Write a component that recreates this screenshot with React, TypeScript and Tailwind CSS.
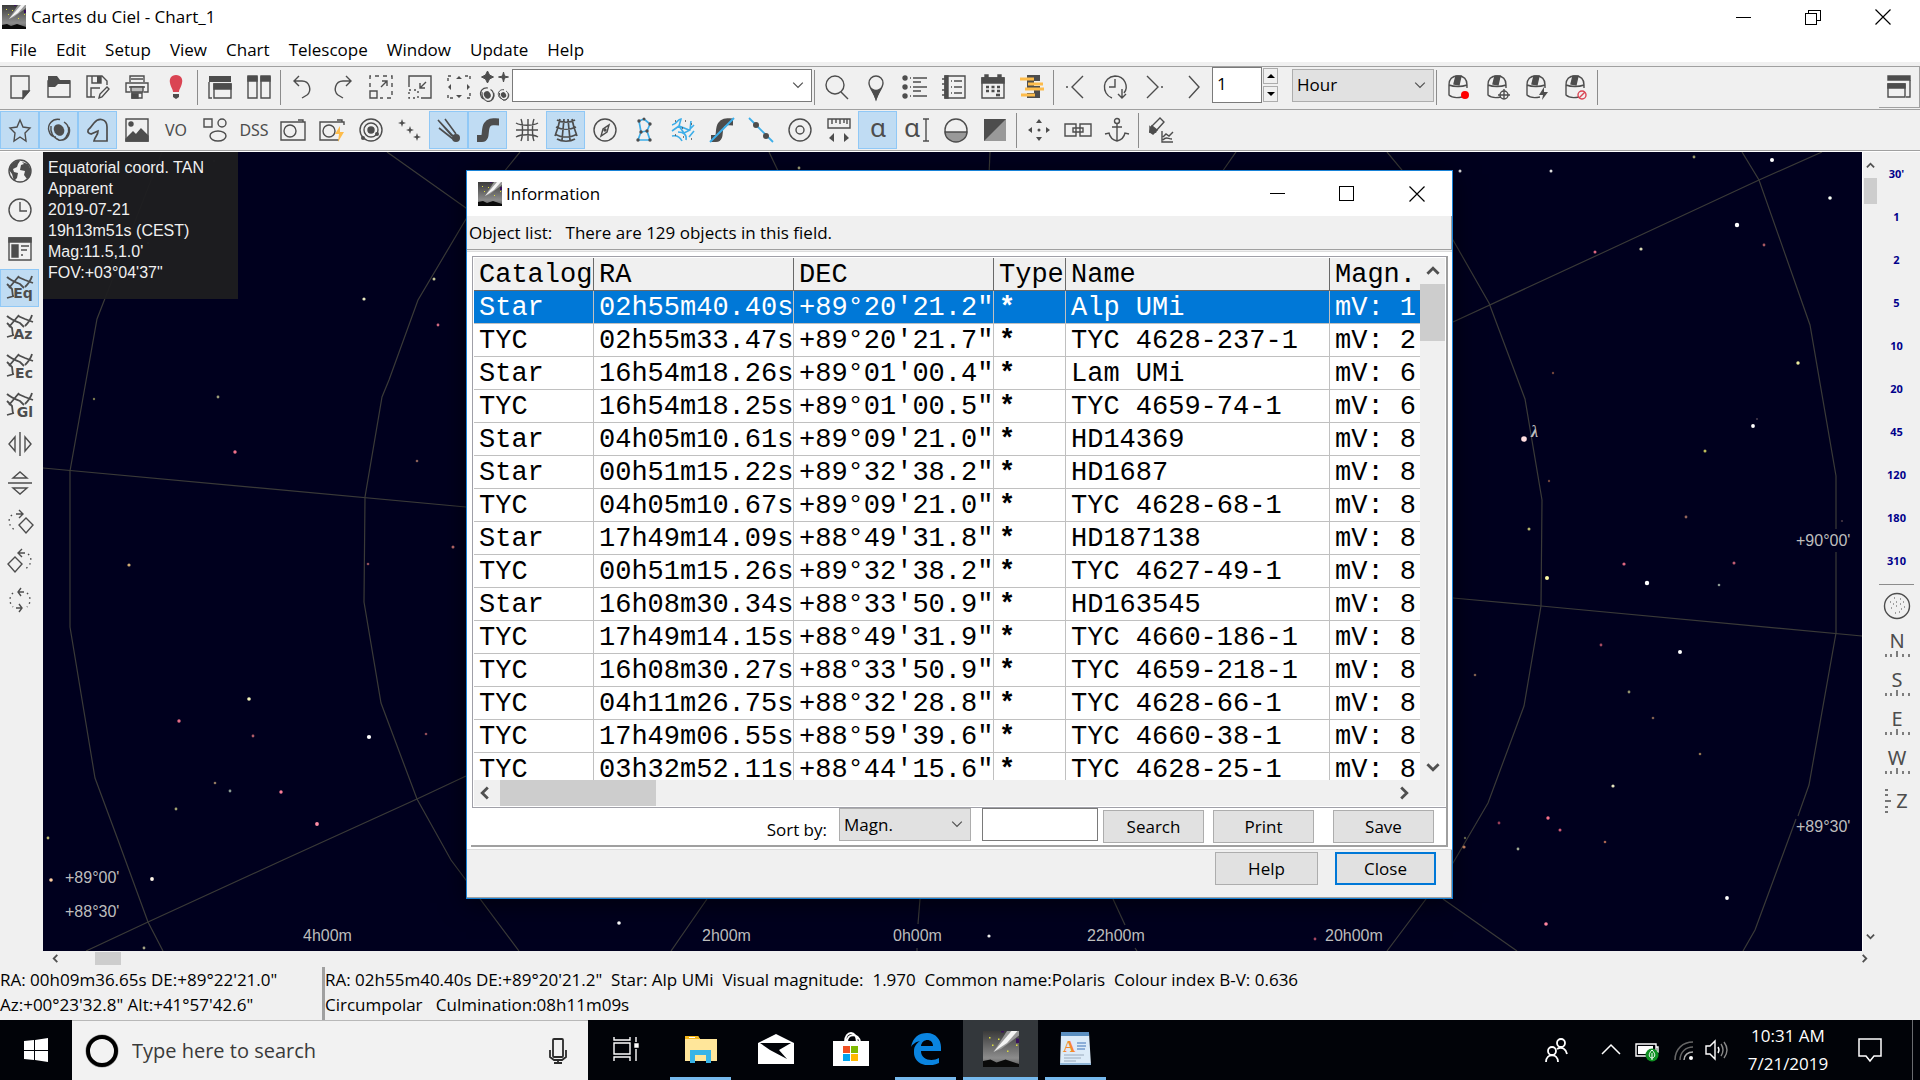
import { useState } from 'react';
import type { ReactNode } from 'react';

const menus = ['File', 'Edit', 'Setup', 'View', 'Chart', 'Telescope', 'Window', 'Update', 'Help'];

const objects = [
  ['Star', '02h55m40.40s', '+89°20\'21.2"', 'Alp UMi', '1'],
  ['TYC', '02h55m33.47s', '+89°20\'21.7"', 'TYC 4628-237-1', '2'],
  ['Star', '16h54m18.26s', '+89°01\'00.4"', 'Lam UMi', '6'],
  ['TYC', '16h54m18.25s', '+89°01\'00.5"', 'TYC 4659-74-1', '6'],
  ['Star', '04h05m10.61s', '+89°09\'21.0"', 'HD14369', '8'],
  ['Star', '00h51m15.22s', '+89°32\'38.2"', 'HD1687', '8'],
  ['TYC', '04h05m10.67s', '+89°09\'21.0"', 'TYC 4628-68-1', '8'],
  ['Star', '17h49m14.09s', '+88°49\'31.8"', 'HD187138', '8'],
  ['TYC', '00h51m15.26s', '+89°32\'38.2"', 'TYC 4627-49-1', '8'],
  ['Star', '16h08m30.34s', '+88°33\'50.9"', 'HD163545', '8'],
  ['TYC', '17h49m14.15s', '+88°49\'31.9"', 'TYC 4660-186-1', '8'],
  ['TYC', '16h08m30.27s', '+88°33\'50.9"', 'TYC 4659-218-1', '8'],
  ['TYC', '04h11m26.75s', '+88°32\'28.8"', 'TYC 4628-66-1', '8'],
  ['TYC', '17h49m06.55s', '+88°59\'39.6"', 'TYC 4660-38-1', '8'],
  ['TYC', '03h32m52.11s', '+88°44\'15.6"', 'TYC 4628-25-1', '8'],
];

// x, y, radius, colour
const stars: [number, number, number, string][] = [
  [94, 399, 1.2, '#77774f'], [218, 397, 1.4, '#9d9d78'], [235, 452, 1.7, '#f0718a'], [417, 461, 1.3, '#8a6058'],
  [129, 565, 1.6, '#d0ac74'], [453, 547, 1.5, '#bd6c6c'], [368, 564, 1.3, '#8f4c58'], [249, 699, 1.8, '#f4f4bb'],
  [179, 721, 1.7, '#e46c85'], [253, 736, 1.4, '#b05c68'], [369, 737, 2.1, '#ffffff'], [426, 734, 1.3, '#8f4c58'],
  [215, 783, 1.3, '#907860'], [230, 791, 1.4, '#8b9b92'], [281, 792, 1.7, '#fb7d98'], [176, 809, 1.4, '#a0a070'],
  [317, 824, 1.9, '#ff8da5'], [48, 838, 1.4, '#b5b56c'], [51, 880, 1.8, '#ffcfa0'], [152, 879, 1.9, '#fff6e8'],
  [144, 948, 1.4, '#a3a384'], [434, 279, 1.5, '#c8c89a'], [364, 299, 1.6, '#e8e8c0'], [214, 161, 1, '#44444a'],
  [148, 243, 1, '#555538'], [438, 325, 1.4, '#d06a80'], [799, 168, 1.4, '#b0b084'],
  [1694, 157, 1.4, '#9a9a6c'], [1772, 160, 2, '#ffffff'], [1830, 198, 1.8, '#f8fff4'], [1737, 225, 2.2, '#ffffff'],
  [1764, 245, 1.4, '#a75862'], [1641, 249, 1.6, '#dadab4'], [1798, 363, 1.7, '#ecec9d'], [1753, 426, 1.9, '#ffffff'],
  [1757, 419, 1.1, '#44384a'], [1705, 451, 1.5, '#bcbc5a'], [1686, 517, 1.4, '#93655b'], [1842, 521, 1.1, '#4a3945'],
  [1624, 564, 1.6, '#dd6680'], [1734, 563, 1.5, '#c05c73'], [1647, 583, 2.2, '#ffffff'], [1719, 585, 1.3, '#8d9a93'],
  [1547, 578, 2, '#fdfba6'], [1601, 645, 1.4, '#a44a60'], [1680, 652, 2, '#ffffff'], [1475, 675, 1.3, '#806050'],
  [1629, 692, 1.4, '#91916d'], [1653, 718, 1.3, '#806050'], [1700, 754, 1.3, '#917450'], [1613, 786, 1.6, '#e6e6c0'],
  [1548, 818, 1.7, '#f7718a'], [1499, 823, 1.4, '#983e58'], [1560, 830, 1.5, '#cd5a74'], [1605, 842, 1.3, '#a86450'],
  [1518, 849, 1.4, '#9fa993'], [1465, 838, 1.2, '#6b6b52'], [1464, 847, 1.6, '#d08a68'], [1727, 898, 1.9, '#ffffff'],
  [1546, 924, 1.8, '#ff85a0'], [619, 923, 1.8, '#ffffff'], [989, 936, 1.6, '#eeeeee'], [1315, 939, 1.4, '#a34862'],
  [1460, 171, 1.5, '#dddddd'], [1551, 171, 1.5, '#dddddd'], [1595, 252, 1.5, '#dd6680'], [1553, 373, 1.2, '#70443c'],
  [1549, 481, 1.2, '#70443c'], [1529, 529, 1.5, '#b5b56c'], [1524, 439, 2.8, '#ffdde0'],
];

const gridLines = [
  '162,152 97,319 70,471 70,627 95,778 118,840 148,922 163,951',
  '520,152 466,219 418,300 389,380 382,397 365,497 364,602 381,703 417,799 451,860 519,951',
  '387,152 466,208 520,250', '43,468 466,507', '466,776 417,799 283,860 148,922 86,951',
  '707,899 671,951', '920,899 918,924', '917,948 917,951', '1113,899 1125,925', '1135,948 1137,951',
  '769,152 780,175', '990,152 989,175', '1236,152 1222,172',
  '1387,152 1402,170 1453,240 1489,303 1525,399 1542,500 1541,606 1524,706 1488,803 1453,863 1387,951',
  '1822,152 1759,180 1600,254 1453,322', '1453,598 1541,606 1862,636', '1443,899 1517,951',
  '1742,152 1759,180 1810,325 1836,476 1836,529', '1836,552 1836,633 1809,785 1798,816', '1796,819 1755,930 1743,951',
];

const chartLabels: [number, number, string][] = [
  [65, 883, "+89°00'"], [65, 917, "+88°30'"], [303, 941, '4h00m'], [702, 941, '2h00m'], [893, 941, '0h00m'],
  [1087, 941, '22h00m'], [1325, 941, '20h00m'], [1796, 546, "+90°00'"], [1796, 832, "+89°30'"],
];

function Icon({ children, size = 24 }: { children: ReactNode; size?: number }) {
  return (
    <svg className="overflow-visible" width={size} height={size} viewBox="0 0 24 24" fill="none" stroke="#4d4d4d" strokeWidth="1.4" aria-hidden="true">
      {children}
    </svg>
  );
}

const d = '#4d4d4d';

function Glyph({ x, y, size, bold, children }: { x: number; y: number; size: number; bold?: boolean; children: ReactNode }) {
  return (
    <text x={x} y={y} fontSize={size} fontWeight={bold ? 700 : 400} textAnchor="middle" fill={d} stroke="none" fontFamily={bold ? 'DejaVu Sans, sans-serif' : 'Noto Sans, sans-serif'}>
      {children}
    </text>
  );
}

const galaxy = (
  <>
    <ellipse cx="12" cy="12" rx="5" ry="6" fill={d} stroke="none" transform="rotate(-30 12 12)" />
    <path d="M13 1.5C5 0 0 7 2 13c1 4 4 6 7 6M4 8c-1 6 2 12 8 14 8 1 12-6 10-13M17 4c5 3 6 9 3 13M11 22c4 1 8-1 9-5" />
  </>
);

const mouse = (
  <>
    <path d="M2 10C2 3 6 1 11 1s9 2 9 9v3M2 10v10c3 3 8 3 13 2M2 10c5 2 13 2 18 0" />
    <path d="M7 9 9 1h5l-2 9z" fill={d} />
  </>
);

const grid = <path d="M-1 1c3 3 8 5 13 7l4 4M11 0 1 12M10 1l7 3 8 3M24 0c-1 4-4 8-7 11M-1 8l5 5 1 8M-1 22l7-2" strokeWidth="1.8" />;

const road = <path d="M1 20.5h5c5 0 2-9 5-13.5s6-3 12-3" strokeWidth="7" />;

const row1 = {
  file: [
    ['New', <><path d="M3 1h18v15l-6 7H3z" /><path d="M15 23v-7h6z" fill={d} /></>],
    ['Open', <><path d="M1 6h22v16H1z" /><path d="M1 8V1h9l3 4h10v4H11L8 12H1z" fill={d} stroke="none" /></>],
    ['Save', <><path d="M9 22H1V1h15l5 5v4M5 22v-9h9" /><path d="M6 1v7h9V1" /><path d="M11 1h4v7h-4z" fill={d} stroke="none" /><path d="m13 23 1-4 7-7 2 2-7 8z" /></>],
    ['Print', <><path d="M5 7V1h14v6M5 17H1V8h22v9h-4M6 4h12M4 12h16" /><path d="M6 12h12v5H6z" fill="#bbb" /><path d="M7 18h10v5H7z" /><path d="M7 19h6v4H7z" fill={d} /></>],
    ['Night vision', <><path d="M12 0C7 0 5 4 6 8c1 5 3 6 3 9h6c0-3 2-4 3-9 1-4-1-8-6-8z" fill="#da4453" stroke="none" /><path d="M9 19h6v3l-3 2-3-2z" fill={d} stroke="none" /></>],
  ],
  tile: [
    ['Cascade', <><path d="M1 1h22v6H1z" fill={d} stroke="none" /><path d="M1 7v16h3M6 9h17v14H6z" /><path d="M6 9h17v5H6z" fill={d} /></>],
    ['Tile', <><path d="M1 2h9v21H1zM14 2h9v21h-9z" /><path d="M1 1h9v5H1zM14 1h9v5h-9z" fill={d} /></>],
  ],
  edit: [
    ['Undo', <path d="m8 1-5 5 5 5M3 6h8c8 0 10 10 5 14l-5 3" />],
    ['Redo', <path d="m16 1 5 5-5 5M21 6h-8C5 6 3 16 8 20l5 3" />],
    ['Zoom in', <><path d="M1 12V1h22v22h-12" strokeDasharray="4 4" /><path d="M1 16h7v7H1zM12 12l6-6M13 6h5v5" /></>],
    ['Zoom out', <><path d="M1 12V1h22v22H13" /><path d="M1 15h9v8H1z" strokeDasharray="2 3" /><path d="m18 7-6 6M12 8v5h5" /></>],
    ['Set FOV', <><path d="M1 6V1h5M18 1h5v5M23 18v5h-5M6 23H1v-5" strokeDasharray="3 2" /><path d="m9 4 3-3 3 3zM9 20l3 3 3-3zM4 9l-3 3 3 3zM20 9l3 3-3 3z" fill={d} stroke="none" /></>],
  ],
  find: [
    ['Search', <><circle cx="10" cy="10" r="9" /><path d="m16 17 7 7" /></>],
    ['Position', <><path d="M12 24C10 17 5 13 5 8a7 7 0 0 1 14 0c0 5-5 9-7 16z" /><path d="M12 24 8 14q4 3 8 0z" fill={d} /></>],
    ['Object list', <><path d="M7 3h1M10 3h14M10 7h8M7 12h1M10 12h14M10 16h8M7 21h1M10 21h14" /><circle cx="2" cy="3" r="2" fill={d} /><circle cx="2" cy="12" r="2" fill={d} /><circle cx="2" cy="21" r="2" fill={d} /></>],
    ['Observing list', <><path d="M3 1h20v22H3zM0 4h5M0 9h5M0 15h5M0 20h5" /><path d="M3 1h3v22H3z" fill={d} /><path d="M9 6h1M12 6h8M9 12h1M12 12h8M9 18h1M12 18h8" /></>],
    ['Calendar', <><path d="M1 3h22v20H1z" /><path d="M1 3h22v5H1zM4 0h3v4H4zM17 0h3v4h-3z" fill={d} /><path d="M5 12h14M5 16h14" strokeWidth="2.6" strokeDasharray="3 2.5" /><path d="M15 20h4" strokeWidth="2.6" /></>],
    ['Script', <><path d="M7 0h13v6h-6v5h6v12H7v-5h7v-5H7z" fill={d} stroke="none" /><path d="M0 4h14M8 9h15M5 14h19M1 20h14" stroke="#fdbc4b" strokeWidth="3" /></>],
  ],
  time: [
    ['Step back', <><path d="M19 1 8 12l11 11" /><circle cx="3" cy="12" r="1" fill={d} stroke="none" /></>],
    ['Now', <><path d="M9 23C-2 19-1 2 12 1c10 0 14 11 9 17" /><path d="M12 4v8H6M19 14v9M15 19l4 4 4-4" /></>],
    ['Step forward', <><path d="m5 1 11 11L5 23" /><circle cx="20" cy="12" r="1" fill={d} stroke="none" /></>],
    ['Animate', <path d="m8 1 10 11L8 23" />],
  ],
  scope: [
    ['Connect', <>{mouse}<circle cx="18" cy="20" r="4" fill="#f00" stroke="none" /></>],
    ['Get position', <>{mouse}<circle cx="18" cy="20" r="4" /><path d="M18 14v10M12 20h12" /></>],
    ['Slew', <>{mouse}<path d="m19 12-5 8h4l-1 5 6-8h-4z" fill={d} stroke="none" /></>],
    ['Abort', <>{mouse}<circle cx="18" cy="20" r="4" stroke="#da4453" /><path d="m15 23 6-6" stroke="#da4453" /></>],
  ],
} as Record<string, [string, ReactNode][]>;

const row2: [string, ReactNode, boolean?][] = [
  ['Stars', <path d="m12 2 3 7 7 1-5 5 1 8-6-4-6 4 1-8-5-5 7-1z" />, true],
  ['Nebulae', galaxy, true],
  ['Nebula outlines', <path d="M8 23c1-5 4-5 4-10l-7 3c-4-1-4-4-1-6l4-5c5-6 13-4 13 4v14z" strokeWidth="1.7" />, true],
  ['Pictures', <><path d="M1 1h22v22H1z" /><path d="m1 21 7-7 3 3 5-6 7 7v5H1z" fill={d} /><circle cx="6" cy="6" r="2" fill={d} /></>],
  ['Virtual observatory', <Glyph x={12} y={18} size={16}>VO</Glyph>],
  ['Shapes', <><path d="M1 1h8v8H1z" /><circle cx="19" cy="5" r="4" /><ellipse cx="15" cy="18" rx="8" ry="5" /></>],
  ['DSS', <Glyph x={12} y={18} size={16}>DSS</Glyph>],
  ['Survey image', <><path d="M0 4h24v18H0zM17 2h5v2" /><circle cx="9" cy="13" r="6" /></>],
  ['Quick image', <><path d="M19 22H0V4h24v3M17 2h5v2" /><circle cx="9" cy="13" r="6" /><path d="m20 8-5 8h4l-1 8 6-10h-4z" fill="#fdbc4b" stroke="none" /></>],
  ['Planets', <><circle cx="12" cy="12" r="11" /><circle cx="12" cy="12" r="7" /><circle cx="12" cy="12" r="3" fill={d} /><circle cx="18" cy="16" r="2" fill={d} stroke="none" /><circle cx="4" cy="20" r="2" fill={d} stroke="none" /></>],
  ['Asteroids', <path d="m4 1 1 3 3 1-3 1-1 3-1-3-3-1 3-1zM12 8l1 3 3 1-3 1-1 3-1-3-3-1 3-1zM19 15l1 3 3 1-3 1-1 3-1-3-3-1 3-1z" fill={d} stroke="none" />],
  ['Comets', <><path d="m1 2 16 17M8 1l11 15M2 10l14 11M1 2l14 16" strokeWidth="1.6" /><circle cx="19" cy="20" r="4" fill={d} stroke="none" /></>, true],
  ['Milky way', road, true],
  ['Grid', <><path d="M6 1c2 5 2 17 0 22M13 1v22M19 1c-2 5-2 17 0 22M1 5c5 3 17 3 22 0M1 12h22M1 19c5-3 17-3 22 0" /></>],
  ['Equatorial grid', <path d="M6 1C5 7 3 13 1 18M10 1 8 22M14 1l2 21M18 1c1 6 3 12 5 17M3 2c5 3 13 3 18 0M2 9c6 3 14 3 20 0M1 16c6 4 16 4 22 0M3 21c5 3 13 3 18 0" strokeWidth="1.7" />, true],
  ['Compass', <><circle cx="12" cy="12" r="11" /><path d="m16 7-2 7-6 4 2-7z" /><circle cx="12" cy="12" r="1" fill={d} /></>],
  ['Constellation figures', <><path d="m7 3 5-2 6 5-3 7 3 9H6l3-8z" stroke="#3daee9" strokeWidth="1.7" /><path d="m9 14 6-1" stroke="#3daee9" strokeWidth="1.7" /><g fill={d} stroke="none"><circle cx="7" cy="3" r="1.7" /><circle cx="12" cy="1" r="1.5" /><circle cx="18" cy="6" r="1.7" /><circle cx="9" cy="14" r="1.7" /><circle cx="15" cy="13" r="1.7" /><circle cx="6" cy="22" r="1.7" /><circle cx="18" cy="22" r="1.7" /></g></>],
  ['Constellation limits', <><path d="M1 7c6-1 5-6 9-6l-2 7 5 7 6-3 1-9M1 13l7-5 10 4 5-5M1 18c5-1 8 1 10 5M7 14c6 0 9 3 8 8M18 19l5-6" stroke="#3daee9" strokeWidth="1.6" /><path d="M4 3h1M14 3h1M20 6h1M4 17h1M12 19h1M20 21h1M11 10h1" /></>],
  ['Galactic line', <>{road}<path d="M0 24 24 0" stroke="#3daee9" strokeWidth="2" /></>],
  ['Ecliptic line', <><path d="m0 0 24 24" stroke="#3daee9" strokeWidth="1.8" /><circle cx="7" cy="7" r="3" fill={d} stroke="none" /><circle cx="17" cy="18" r="3" fill={d} stroke="none" /></>],
  ['Mark', <><circle cx="12" cy="12" r="11" /><circle cx="12" cy="12" r="4" /></>],
  ['Ruler', <><path d="M1 1h22v9H1zM5 1v5M9 1v4M13 1v5M17 1v4M20 1v5" /><path d="m7 15-5 5 5 4zM17 15l5 5-5 4z" fill={d} stroke="none" /></>],
  ['Labels', <Glyph x={12} y={19} size={26}>α</Glyph>, true],
  ['Edit labels', <><Glyph x={7} y={19} size={26}>α</Glyph><path d="M18 1h6M18 23h6M21 1v22" /></>],
  ['Horizon', <><circle cx="12" cy="12" r="11" /><path d="M1 14a11 10 0 0 0 22 0z" fill="#999" /></>],
  ['Background', <><path d="M1 1h22v22H1z" fill="#999" stroke="none" /><path d="M1 1h22L1 23z" fill={d} stroke="none" /></>],
];

const row2b: [string, ReactNode][] = [
  ['Move', <><path d="m12 1 3 4H9zM12 23l3-4H9zM1 12l4-3v6zM23 12l-4-3v6z" fill={d} stroke="none" /><circle cx="12" cy="12" r="1.5" fill={d} stroke="none" /></>],
  ['Link charts', <path d="M10 8V6H-1v12h11v-2M14 8V6h11v12H14v-2M7 10h10v4H7zM10 8v8M14 8v8" />],
  ['Anchor', <><circle cx="12" cy="3" r="2.5" /><path d="M12 6v17M7 9h10M0 16l4-1c1 5 4 7 8 8 4-1 7-3 8-8l4 1" /></>],
];

const leftTools: [string, ReactNode, boolean?][] = [
  ['World', <><circle cx="12" cy="12" r="11" /><path d="M3 6c3-3 6-5 9-4l-2 3-1 3-4 2 1 3 4 1-1 5-3 3-2-7-3-4zM14 3l6 2 3 6-1 6-3 3-3-4 1-4-5-1 1-5 3-1z" fill={d} stroke="none" /></>],
  ['Time', <><circle cx="12" cy="12" r="11" /><path d="M12 4v9h7" /></>],
  ['Panel', <><path d="M1 1h22v22H1z" /><path d="M1 1h22v4H1zM4 8h6v12H4z" fill={d} /><path d="M13 9h8M13 13h6M13 18h2" /></>],
  ['Equatorial', <>{grid}<Glyph x={15} y={22} size={14} bold>Eq</Glyph></>, true],
  ['Azimuthal', <>{grid}<Glyph x={15} y={24} size={14} bold>Az</Glyph></>],
  ['Ecliptic', <>{grid}<Glyph x={16} y={24} size={14} bold>Ec</Glyph></>],
  ['Galactic', <>{grid}<Glyph x={17} y={24} size={14} bold>Gl</Glyph></>],
  ['Flip horizontally', <path d="M12 0v24M7 5v14l-6-7zM17 5v14l6-7z" />],
  ['Flip vertically', <path d="M0 12h24M5 7h14l-7-6zM5 17h14l-7 6z" />],
  ['Rotate right', <><path d="m18 8 7 7-7 8-7-8zM8 4h7M11 0l4 4-4 4" /><path d="M4 5C-1 9 1 17 7 20" strokeDasharray="1.5 3.5" /></>],
  ['Rotate left', <><path d="m7 8 7 7-7 8-7-8zM10 4h7M14 0l-4 4 4 4" /><path d="M20 5c5 4 3 12-3 15" strokeDasharray="1.5 3.5" /></>],
  ['Rotate 180', <><path d="M10 4h6M13 0l-3 4 3 4M8 20h6M11 16l3 4-3 4" /><path d="M5 5c-4 4-4 10 0 14M19 5c4 4 4 10 0 14" strokeDasharray="1.5 3.5" /></>],
];

function ToolButton({ name, active, children }: { name: string; active?: boolean; children: ReactNode }) {
  return (
    <button
      type="button"
      aria-label={name}
      className={`flex h-[38px] w-[39px] shrink-0 items-center justify-center border ${active ? 'border-[#90c8f6] bg-[#c0dcf3]' : 'border-transparent'}`}
    >
      <Icon>{children}</Icon>
    </button>
  );
}

function ToolGroup({ items }: { items: [string, ReactNode][] }) {
  return (
    <>
      {items.map(([name, icon]) => <ToolButton key={name} name={name}>{icon}</ToolButton>)}
      <Separator />
    </>
  );
}

function Separator() {
  return <div className="ml-0.5 mr-0.5 h-[35px] w-px shrink-0 bg-[#8c8c8c]" />;
}

function Chevron({ dir, size = 10, width = 2 }: { dir: 'up' | 'down' | 'left' | 'right'; size?: number; width?: number }) {
  const paths = { up: 'M1 7l4-4 4 4', down: 'M1 3l4 4 4-4', left: 'M7 1L3 5l4 4', right: 'M3 1l4 4-4 4' };
  return (
    <svg width={size} height={size} viewBox="0 0 10 10" fill="none" stroke="#505050" strokeWidth={width} aria-hidden="true">
      <path d={paths[dir]} />
    </svg>
  );
}

function CometIcon({ id, size }: { id: string; size: number }) {
  return (
    <svg width={size} height={size} viewBox="0 0 24 24" aria-hidden="true">
      <defs>
        <linearGradient id={id} x1="0" y1="0" x2="0" y2="1">
          <stop offset="0" stopColor="#3a3a3a" />
          <stop offset="0.75" stopColor="#8c8c8c" />
          <stop offset="1" stopColor="#555" />
        </linearGradient>
      </defs>
      <path d="M0 0h24v24H0z" fill={`url(#${id})`} />
      <path d="M7 14 16 0h8v3L12 12z" fill="#999" />
      <path d="M7 14 19 0h4l-7 8z" fill="#f4f4f4" />
      <path d="M0 20l5-1 4 2 6-2 9 3v2H0z" fill="#0a0a0a" />
      <path d="M4 4h1v1H4zM10 5h1v1h-1zM22 9h1v1h-1zM16 13h1v1h-1zM6 9h1v1H6z" fill="#dede3c" />
      <path d="M22 5h2v3h-2zM12 0h2v1h-2z" fill="#39125c" />
    </svg>
  );
}

function WindowButtons({ restore }: { restore?: boolean }) {
  return (
    <div className={`flex ${restore ? 'pr-0.5' : ''}`}>
      <button type="button" aria-label="Minimize" className="flex h-8 w-[70px] items-center justify-center">
        <span className="h-px w-[15px] bg-black" />
      </button>
      <button type="button" aria-label={restore ? 'Restore' : 'Maximize'} className="flex h-8 w-[70px] items-center justify-center">
        <svg width="16" height="16" viewBox="0 0 16 16" fill="none" stroke="#000" shapeRendering="crispEdges">
          {restore ? <path d="M.5 4.5h11v11H.5zM3.5 4V1.5h12v10H12" /> : <path d="M.5.5h14v14H.5z" />}
        </svg>
      </button>
      <button type="button" aria-label="Close window" className="flex h-8 w-[70px] items-center justify-center">
        <svg width="16" height="16" viewBox="0 0 16 16" stroke="#000" strokeWidth="1.2"><path d="m.5.5 15 15M15.5.5l-15 15" /></svg>
      </button>
    </div>
  );
}

function DialogButton({ children, className = 'h-[33px] w-[101px] border-[#adadad]' }: { children: string; className?: string }) {
  return <button type="button" className={`shrink-0 border bg-[#e1e1e1] ${className}`}>{children}</button>;
}

function SkyChart() {
  return (
    <svg className="absolute inset-0 h-full w-full" viewBox="43 152 1819 799" preserveAspectRatio="xMidYMid slice" aria-label="Sky chart">
      <g fill="none" stroke="#3a3a38" strokeWidth="1.2">
        {gridLines.map((points) => <polyline key={points} points={points} />)}
      </g>
      {stars.map(([x, y, r, color]) => <circle key={`${x}-${y}`} cx={x} cy={y} r={r} fill={color} />)}
      <g fill="#bdbdbd" fontFamily="Liberation Sans, sans-serif" fontSize="16">
        {chartLabels.map(([x, y, label]) => <text key={label} x={x} y={y}>{label}</text>)}
        <text x="1531" y="437" fontFamily="Liberation Serif, serif" fontStyle="italic" fontWeight="700">λ</text>
      </g>
    </svg>
  );
}

function InformationDialog() {
  const [selected, setSelected] = useState(0);
  return (
    <section aria-label="Information" className="absolute left-[423px] top-[18px] flex w-[987px] flex-col border border-[#1883d7] bg-[#f0f0f0] shadow-[0_4px_24px_rgba(0,0,0,0.6)]">
      <header className="flex h-[45px] items-center justify-between bg-white">
        <div className="flex items-center gap-1 pl-[11px]">
          <CometIcon id="comet-dialog" size={24} />
          <h2>Information</h2>
        </div>
        <WindowButtons />
      </header>
      <p className="h-[34px] whitespace-pre border-b border-r border-[#a0a0a0] pl-0.5 leading-[34px]">Object list:   There are 129 objects in this field.</p>
      <div className="mt-px border-y border-[#dcdcdc] bg-white px-1 pb-0.5 pt-1">
        <div className="border-b-2 border-r-2 border-[#a0a0a0] pl-px">
          <div className="border border-r-0 border-[#a0a0a8] p-px">
            <div className="flex">
              <div className="h-[522px] min-w-0 flex-1 overflow-hidden">
                <table className="w-full table-fixed border-separate border-spacing-0 font-['Liberation_Mono',monospace] text-[27px] leading-[30px]">
                  <colgroup>
                    <col className="w-[120px]" />
                    <col className="w-[200px]" />
                    <col className="w-[200px]" />
                    <col className="w-[72px]" />
                    <col className="w-[264px]" />
                    <col />
                  </colgroup>
                  <thead>
                    <tr>
                      {['Catalog', 'RA', 'DEC', 'Type', 'Name', 'Magn.'].map((head) => (
                        <th key={head} scope="col" className="h-[33px] whitespace-pre border-b border-r border-[#696969] bg-[#f0f0f0] p-0 pl-[5px] pt-0.5 text-left font-normal last:border-r-0">{head}</th>
                      ))}
                    </tr>
                  </thead>
                  <tbody>
                    {objects.map(([catalog, ra, dec, name, mag], i) => (
                      <tr key={name + ra} onClick={() => setSelected(i)} className={i === selected ? 'bg-[#0078d7] text-white' : 'bg-white'}>
                        {[catalog, ra, dec, '*', name, `mV: ${mag}`].map((value, col) => (
                          <td key={col} className={`h-[33px] whitespace-pre border-b border-r border-[#c0c0c0] p-0 pl-[5px] pt-0.5 last:border-r-0 ${col === 3 ? 'font-bold' : ''}`}>{value}</td>
                        ))}
                      </tr>
                    ))}
                  </tbody>
                </table>
              </div>
              <div className="flex w-[25px] flex-col items-center bg-[#f0f0f0]">
                <div className="flex h-[26px] items-center"><Chevron dir="up" size={14} /></div>
                <div className="h-[57px] w-full bg-[#cdcdcd]" />
                <div className="mb-1.5 mt-auto"><Chevron dir="down" size={14} /></div>
              </div>
            </div>
            <div className="flex h-[26px] items-center bg-[#f0f0f0] pl-1">
              <Chevron dir="left" size={14} />
              <div className="ml-2 h-full w-[156px] bg-[#cdcdcd]" />
              <div className="ml-auto mr-[34px]"><Chevron dir="right" size={14} /></div>
            </div>
          </div>
          <form className="flex h-[37px] items-start justify-end pr-3" onSubmit={(e) => e.preventDefault()}>
            <label htmlFor="sort" className="mr-3 mt-2 leading-7">Sort by:</label>
            <div className="relative">
              <select id="sort" className="h-[33px] w-[132px] appearance-none border border-[#adadad] bg-[#e1e1e1] pl-1" defaultValue="Magn.">
                <option>Magn.</option>
                <option>Name</option>
              </select>
              <span className="pointer-events-none absolute right-2 top-2.5"><Chevron dir="down" size={12} width={1} /></span>
            </div>
            <input aria-label="Search text" className="ml-[11px] h-[33px] w-[116px] border border-[#7a7a7a] bg-white px-1" />
            <div className="ml-[5px] mt-0.5 flex">
              <DialogButton>Search</DialogButton>
              <div className="ml-[9px] mr-[19px]"><DialogButton>Print</DialogButton></div>
              <DialogButton>Save</DialogButton>
            </div>
          </form>
        </div>
      </div>
      <footer className="flex h-12 items-start justify-end gap-[17px] border-b border-r border-[#a0a0a0] pr-[15px] pt-0.5">
        <DialogButton className="h-[33px] w-[103px] border-[#adadad]">Help</DialogButton>
        <DialogButton className="h-[33px] w-[101px] border-2 border-[#0078d7]">Close</DialogButton>
      </footer>
    </section>
  );
}

function TaskButton({ name, running, active, children }: { name: string; running?: boolean; active?: boolean; children: ReactNode }) {
  return (
    <button type="button" aria-label={name} className={`flex h-full w-[75px] flex-col items-center ${active ? 'bg-[#33373b]' : ''}`}>
      <span className="flex h-[57px] items-center">{children}</span>
      {running && <span className={`h-[3px] bg-[#76b9ed] ${active ? 'w-full' : 'w-[61px]'}`} />}
    </button>
  );
}

function Taskbar() {
  return (
    <footer className="flex h-[60px] shrink-0 bg-[#010308] text-white">
      <button type="button" aria-label="Start" className="flex w-[72px] items-center justify-center">
        <svg width="24" height="24" viewBox="0 0 24 24" fill="#fff"><path d="m0 3 10-1v10H0zM11 2l13-2v12H11zM0 13h10v9L0 21zM11 13h13v11l-13-2z" /></svg>
      </button>
      <label className="flex w-[516px] items-center border-t border-[#b8b8b8] bg-[#f2f2f2] pl-[13px] pr-5 text-[#2b2b2b]">
        <svg width="34" height="34" viewBox="0 0 34 34" fill="none" aria-hidden="true"><circle cx="17" cy="17" r="15" stroke="#999" strokeWidth="3" /><circle cx="17" cy="17" r="14" stroke="#000" strokeWidth="4" /></svg>
        <input placeholder="Type here to search" aria-label="Type here to search" className="ml-[13px] min-w-0 flex-1 bg-transparent text-[20px] placeholder:text-[#3a3a3a]" />
        <svg width="20" height="26" viewBox="0 0 20 26" fill="none" stroke="#2b2b2b" strokeWidth="1.8" aria-hidden="true"><rect x="5" y="1" width="10" height="18" rx="1" /><path d="M2 12v7l4 3h8l4-3v-7M10 22v3M6 25h8" /></svg>
      </label>
      <TaskButton name="Task view">
        <svg width="26" height="26" viewBox="0 0 26 26" fill="none" stroke="#fff" strokeWidth="1.4"><path d="M1 1v3h16V1M1 7h16v11H1zM1 25v-4h16v4M23 1v5M23 13v12" /><path d="M22 8h3v3h-3z" fill="#fff" /></svg>
      </TaskButton>
      <TaskButton name="File Explorer" running>
        <svg width="32" height="28" viewBox="0 0 32 28"><path d="M0 1h13l2 3h17v22H0z" fill="#ffe69a" /><path d="M0 1h13l2 3H0z" fill="#f5b81b" /><path d="M4 2h6v1H4z" fill="#fff" /><path d="M5 15h21v13h-5v-8H10v8H5z" fill="#38b4e8" /></svg>
      </TaskButton>
      <TaskButton name="Mail">
        <svg width="36" height="30" viewBox="0 0 36 30"><path d="m0 9 18-9 18 9v21H0z" fill="#fff" /><path d="M2 9h31L21 16l8 9-17-9z" fill="#010308" /></svg>
      </TaskButton>
      <TaskButton name="Store">
        <svg width="36" height="34" viewBox="0 0 36 34"><path d="M12 10c0-12 12-12 12 0M14 10c0-9 12-9 13 0" fill="none" stroke="#fff" strokeWidth="2" /><path d="M0 9h36v25H0z" fill="#fff" /><path d="M10 14h7v7h-7z" fill="#f05022" /><path d="M18 14h7v7h-7z" fill="#7fba00" /><path d="M10 22h7v7h-7z" fill="#00a4ef" /><path d="M18 22h7v7h-7z" fill="#ffb900" /></svg>
      </TaskButton>
      <TaskButton name="Edge" running>
        <svg width="32" height="32" viewBox="0 0 32 32"><path d="M1 14C3 4 9 0 17 0c9 0 14 7 14 14v4H11c0 9 11 11 18 7v5C16 36 3 30 4 18c0-5 3-8 6-10-5 1-8 4-9 6zm10-1h12c0-8-11-8-12 0z" fill="#0a84e0" /></svg>
      </TaskButton>
      <TaskButton name="Cartes du Ciel" running active><CometIcon id="comet-task" size={36} /></TaskButton>
      <TaskButton name="WordPad" running>
        <svg width="32" height="34" viewBox="0 0 32 34"><path d="M1 1h28l2 32H0z" fill="#dcebf8" /><path d="M1 0h28v4H1z" fill="#5b8fc0" /><path d="M0 31h31v2H0z" fill="#8eb4d6" /><path d="M17 11h9M17 14h9M17 17h8" stroke="#3f73b8" /><path d="M4 23h20M4 26h17M4 29h12" stroke="#9aaabc" /><text x="3" y="20" fontFamily="Liberation Serif, serif" fontWeight="700" fontSize="17" fill="#f58a2e">A</text></svg>
      </TaskButton>
      <div className="ml-auto flex items-center">
        <svg width="24" height="24" viewBox="0 0 24 24" fill="none" stroke="#fff" strokeWidth="1.8" aria-label="People"><circle cx="16" cy="5" r="4" /><circle cx="7" cy="13" r="4" /><path d="M1 24c0-9 12-9 12 0M12 11c5-3 9 0 10 5" /></svg>
        <svg className="ml-8" width="20" height="20" viewBox="0 0 20 20" fill="none" stroke="#fff" strokeWidth="1.5" aria-label="Show hidden icons"><path d="m1 14 9-9 9 9" /></svg>
        <svg className="ml-3.5" width="24" height="24" viewBox="0 0 24 24" aria-label="Battery"><path d="M1 6h20v12H1zM21 9h2v5h-2" fill="none" stroke="#fff" strokeWidth="1.4" /><path d="M3 8h15v8H3z" fill="#fff" /><circle cx="17" cy="17" r="6.5" fill="#0f8f22" /><path d="M17 12c5 5 2 8 0 8s-5-3 0-8zM17 15v7" fill="none" stroke="#fff" /></svg>
        <svg className="ml-3.5" width="22" height="22" viewBox="0 0 22 22" fill="none" strokeWidth="1.5" aria-label="Wireless"><path d="M2 21C2 10 10 3 20 3M7 21C7 13 13 8 20 8" stroke="#666" /><path d="M11 21c0-5 4-8 9-8" stroke="#aaa" /><circle cx="18" cy="19" r="2" fill="#fff" /></svg>
        <svg className="ml-2.5" width="24" height="22" viewBox="0 0 24 22" fill="none" strokeWidth="1.4" aria-label="Volume"><path d="M1 7h4l5-5v18l-5-5H1z" stroke="#fff" /><path d="M13 8q2 3 0 6" stroke="#fff" /><path d="M16 5q4 6 0 12M19 3q6 8 0 16" stroke="#888" /></svg>
        <div className="w-[118px] text-center leading-7"><div>10:31 AM</div><div>7/21/2019</div></div>
        <svg className="ml-[11px] mr-[30px]" width="24" height="26" viewBox="0 0 24 26" fill="none" stroke="#fff" strokeWidth="1.5" aria-label="Notifications"><path d="M1 2h22v17h-7l-4 5-4-5H1z" /></svg>
        <div className="mr-[7px] h-[60px] w-px bg-[#6a6c70]" />
      </div>
    </footer>
  );
}

export default function App() {
  return (
    <div className="flex h-screen flex-col overflow-hidden bg-[#f0f0f0] font-['Open_Sans',sans-serif] text-[17px] text-black">
      <header className="flex h-[34px] shrink-0 items-center justify-between bg-white">
        <div className="flex items-center gap-[5px] pl-0.5">
          <CometIcon id="comet-title" size={24} />
          <h1>Cartes du Ciel - Chart_1</h1>
        </div>
        <WindowButtons restore />
      </header>
      <nav className="flex h-7 shrink-0 items-center gap-[19px] bg-white pl-2.5 pt-1">
        {menus.map((menu) => <button type="button" key={menu}>{menu}</button>)}
      </nav>

      {/* Toolbars */}
      <div className="mt-1 flex h-[43px] shrink-0 items-center border-t border-[#a0a0a0] pb-0.5">
        <ToolGroup items={row1.file} />
        <ToolGroup items={row1.tile} />
        {row1.edit.map(([name, icon]) => <ToolButton key={name} name={name}>{icon}</ToolButton>)}
        <svg className="shrink-0" width="34" height="34" viewBox="0 0 33 34" fill={d} stroke={d} strokeWidth="1" aria-hidden="true">
          <path d="m9 1 2 4 4 2-4 2-2 4-2-4-4-2 4-2zM25 2l1 4 4 1-4 1-1 4-1-4-4-1 4-1z" />
          <g transform="translate(1 17) scale(.65)" strokeWidth="1.8" fill="none">{galaxy}</g>
          <g transform="translate(19 19) scale(.5)" strokeWidth="2" fill="none">{galaxy}</g>
        </svg>
        <div className="relative -mt-1">
          <select aria-label="Search object" className="block h-[33px] w-[300px] appearance-none border border-[#7a7a7a] bg-white">
            <option></option>
          </select>
          <span className="pointer-events-none absolute right-2 top-2.5"><Chevron dir="down" size={12} width={1} /></span>
        </div>
        <Separator />
        <ToolGroup items={row1.find} />
        {row1.time.map(([name, icon]) => <ToolButton key={name} name={name}>{icon}</ToolButton>)}
        <input aria-label="Time step" defaultValue="1" className="-mt-1 h-9 w-[50px] border border-[#7a7a7a] bg-white pb-1 pl-1" />
        <div className="-mt-1 mr-3.5 flex w-4 flex-col gap-0.5 pl-px">
          <button type="button" aria-label="Increase" className="flex h-4 items-center justify-center border border-[#adadad]"><svg width="8" height="4"><path d="m0 4 4-4 4 4z" /></svg></button>
          <button type="button" aria-label="Decrease" className="flex h-4 items-center justify-center border border-[#adadad]"><svg width="8" height="4"><path d="m0 0 4 4 4-4z" /></svg></button>
        </div>
        <div className="relative -mt-1">
          <select aria-label="Time unit" className="block h-[33px] w-[142px] appearance-none border border-[#adadad] bg-[#e1e1e1] pl-1" defaultValue="Hour">
            <option>Hour</option>
            <option>Day</option>
          </select>
          <span className="pointer-events-none absolute right-2 top-2.5"><Chevron dir="down" size={12} width={1} /></span>
        </div>
        <Separator />
        <ToolGroup items={row1.scope} />
        <button type="button" aria-label="Restore chart" className="ml-auto flex h-[41px] w-[41px] items-center justify-center border-b border-r border-[#a0a0a0]">
          <Icon><path d="M1 1h22v4H1z" fill={d} /><path d="M23 5v17h-4M1 9h17v13H1z" /><path d="M1 9h17v4H1z" fill={d} /></Icon>
        </button>
      </div>
      <div className="flex h-[42px] shrink-0 items-center border-y border-[#a0a0a0]">
        {row2.map(([name, icon, active]) => <ToolButton key={name} name={name} active={active}>{icon}</ToolButton>)}
        <Separator />
        <ToolGroup items={row2b} />
        <ToolButton name="Draw"><path d="m2 9 9-9 4 4-9 10H1z" /><path d="M1 14V9l5 5z" fill={d} /><path d="m3 8 5 4-4 4-3-2z" fill={d} /><path d="M13 13v11h11M14 19l3-3 3 2 4-4M14 22c3-4 5-1 9-1" /></ToolButton>
      </div>

      {/* Chart area */}
      <main className="flex min-h-0 flex-1 border-t border-white">
        <div className="flex w-[43px] shrink-0 flex-col gap-px">
          {leftTools.map(([name, icon, active]) => <ToolButton key={name} name={name} active={active}>{icon}</ToolButton>)}
        </div>
        <div className="relative min-w-0 flex-1 overflow-hidden bg-[#00001e]">
          <SkyChart />
          <div className="absolute left-0 top-0 h-[147px] w-[195px] bg-[#1e1e20]/95 pl-[5px] pt-[5px] font-['Liberation_Sans',sans-serif] text-[16px] leading-[21px] text-[#f0f0f0]">
            <p>Equatorial coord. TAN</p>
            <p>Apparent</p>
            <p>2019-07-21</p>
            <p>19h13m51s (CEST)</p>
            <p>Mag:11.5,1.0'</p>
            <p>FOV:+03°04'37"</p>
          </div>
          <InformationDialog />
        </div>
        <div className="flex w-[15px] shrink-0 flex-col items-center border-l border-white">
          <div className="flex h-[26px] items-center"><Chevron dir="up" size={9} /></div>
          <div className="h-[26px] w-[13px] bg-[#cdcdcd]" />
          <div className="mb-2.5 mt-auto"><Chevron dir="down" size={9} /></div>
        </div>
        <div className="flex w-[43px] shrink-0 flex-col items-center">
          {["30'", '1', '2', '5', '10', '20', '45', '120', '180', '310'].map((fov) => (
            <button type="button" key={fov} className="h-[43px] pr-1 pt-0.5 text-[11px] font-bold text-[#00008b]">{fov}</button>
          ))}
          <div className="mr-1 mt-0.5 h-px w-[35px] bg-[#8c8c8c]" />
          <div className="flex flex-col gap-px pr-1 pt-0.5">
            <ToolButton name="All sky"><circle cx="12" cy="12" r="12.5" /><path d="M5 8h1M9 4h1M15 5h1M18 8h1M6 14h1M11 12h1M16 15h1M19 13h1M10 19h1M14 18h1M11 8h1M8 10h1M15 10h1" strokeWidth="1" /></ToolButton>
            {['N', 'S', 'E', 'W'].map((dir) => (
              <ToolButton key={dir} name={`Look ${dir}`}><Glyph x={12} y={15} size={20}>{dir}</Glyph><path d="M1 21v3M6 21v3M12 18v6M18 21v3M24 21v3" /></ToolButton>
            ))}
            <ToolButton name="Zenith"><Glyph x={17} y={19} size={20}>Z</Glyph><path d="M0 1h3M0 6h3M0 12h6M0 18h3M0 23h3" /></ToolButton>
          </div>
        </div>
      </main>
      <div className="flex h-[15px] shrink-0 items-center pl-[51px] pr-[51px]">
        <Chevron dir="left" size={9} />
        <div className="ml-[35px] h-[13px] w-[26px] bg-[#cdcdcd]" />
        <div className="ml-auto"><Chevron dir="right" size={9} /></div>
      </div>
      <div className="flex h-[54px] shrink-0 whitespace-pre pt-px leading-[25px]">
        <div className="w-[325px] border-r-3 border-[#a0a0a0]">
          <p>RA: 00h09m36.65s DE:+89°22'21.0"</p>
          <p>Az:+00°23'32.8" Alt:+41°57'42.6"</p>
        </div>
        <div>
          <p>RA: 02h55m40.40s DE:+89°20'21.2"  Star: Alp UMi  Visual magnitude:  1.970  Common name:Polaris  Colour index B-V: 0.636</p>
          <p>Circumpolar   Culmination:08h11m09s</p>
        </div>
      </div>
      <Taskbar />
    </div>
  );
}
